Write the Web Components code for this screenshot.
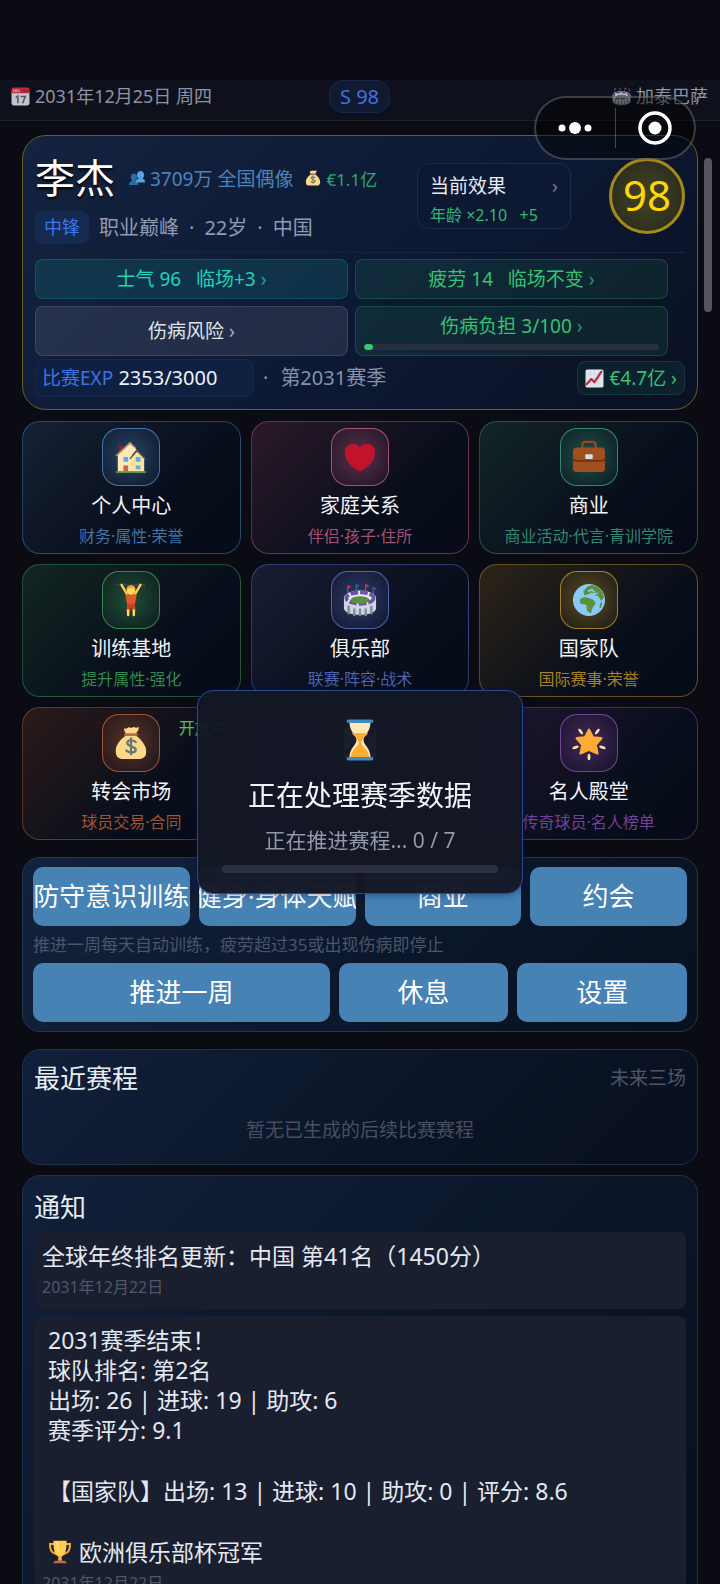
<!DOCTYPE html>
<html lang="zh-CN">
<head>
<meta charset="UTF-8">
<meta name="viewport" content="width=device-width, initial-scale=1">
<title>球员生涯</title>
<style>
    html, body {
        margin: 0;
        height: 100%;
    }
    body {
        background: #0b0b14;
        color: #eef1f8;
        font-family: "Noto Sans", "Noto Sans CJK SC", sans-serif;
        font-size: 19px;
        overflow: hidden;
    }
</style>
</head>
<body>
<career-app></career-app>

<script>
// 36x36 artwork, keyed by name
const ICONS = {
    calendar: `<path fill="#e1e5ea" d="M1 9h34v22a4 4 0 0 1-4 4H5a4 4 0 0 1-4-4z"/><path fill="#dd2e44" d="M5 1h26a4 4 0 0 1 4 4v7H1V5a4 4 0 0 1 4-4z"/><path d="M5 4v5H3M8 4v5h3V4M14 4v5h3" stroke="#f5dfe2" stroke-width="1.5" fill="none"/><circle cx="25" cy="7" r="1.5" fill="#7d1323"/><circle cx="31" cy="7" r="1.5" fill="#7d1323"/><path d="M9 20l4-3v14M18 18h9l-5 13" stroke="#5d6b78" stroke-width="3" fill="none"/>`,
    people: `<path fill="#2d6d9f" d="M0 34c0-7 3-9 8-10-3-2-4-5-4-8 0-5 3-8 7-8s7 3 7 8c0 3-1 6-4 8 5 1 7 3 7 10z"/><path fill="#55a3e0" d="M15 28c0-6 2-8 7-9-3-2-4-5-4-8 0-5 3-9 8-9s8 4 8 9c0 3-1 6-4 8 5 1 6 3 6 9z"/>`,
    money: `<path fill="#fdd888" d="M13 10C5 15 1 22 2 28c0 5 4 7 8 7h16c4 0 8-2 8-7 1-6-4-13-11-18z"/><path fill="#fdd888" d="M11 2c2 2 3 0 5-1 2 2 3 0 5 0 2 1 3 1 5 0 1 3-2 5-3 8H13c-1-3-3-4-2-7z"/><path d="M12 9h12" stroke="#bf6952" stroke-width="2.5" stroke-linecap="round"/><path d="M23 17c-2-2-9-3-9 1s9 3 9 7-7 4-10 1M18 13v17" stroke="#67757f" stroke-width="2.4" fill="none" stroke-linecap="round"/>`,
    chart: `<rect x="1" y="1" width="34" height="34" rx="3" fill="#e1e8ed"/><path d="M1 10h34M1 18h34M1 26h34M10 1v34M18 1v34M26 1v34" stroke="#c3ced6"/><path d="M3 29l9-10 6 6L31 5" stroke="#c91f42" stroke-width="4" fill="none" stroke-linejoin="round" stroke-linecap="round"/>`,
    house: `<path fill="#8e1d2c" d="M5 6h5v9H5z"/><path fill="#5c913b" d="M2 33h32v2H2z"/><path fill="#ffe8b6" d="M4 16L17 4l7 6-5 6v17H4z"/><path fill="#ffe3a0" d="M18 19l7-7 7 7v14H18z"/><path d="M2 17L17 3l6 6" stroke="#b89b6b" stroke-width="1.5" fill="none"/><path d="M17 20l7-9 9 9" stroke="#66594c" stroke-width="1.6" fill="none"/><path fill="#55acee" d="M10 18h5v5h-5zM23 18h5v5h-5zM23 27h5v4h-5z"/><path fill="#c1694f" d="M10 27h5v6h-5z"/>`,
    heart: `<path fill="#c1142c" d="M34 13c0-5-4-9-8-9-3 0-6 1-8 4-2-3-5-4-8-4-4 0-8 4-8 9 0 9 8 17 16 20 8-3 16-11 16-20z"/>`,
    briefcase: `<path d="M11 9V5a3 3 0 0 1 3-3h8a3 3 0 0 1 3 3v4" stroke="#8f4a1f" stroke-width="2.500" fill="none"/><rect x="1" y="8" width="34" height="26" rx="4" fill="#a0501e"/><path d="M1 19c0 3 2 3 4 3h26c2 0 4 0 4-3" stroke="#6f3210" stroke-width="1.800" fill="none"/><rect x="14" y="15" width="8" height="5" rx="1" fill="#d7dee3"/>`,
    lifter: `<path d="M1 2h34" stroke="#3b4b58" stroke-width="1.500"/><path d="M1 0v4M34 0v4" stroke="#202a33" stroke-width="2"/><path d="M8 2l7 12M28 2l-7 12" stroke="#ffcb4c" stroke-width="2.600" stroke-linecap="round"/><path fill="#e2572b" d="M12 12h12l-2 12h-8z"/><circle cx="18" cy="8" r="4.500" fill="#ffdc5d"/><path fill="#f3a52f" d="M13 7c0-6 10-6 10 0-3-2-7-2-10 0z"/><path fill="#c9432a" d="M14 22h8l1 8h-4l-1-5-1 5h-4z"/><path d="M15 29v5M21 29v5" stroke="#ffdc5d" stroke-width="2.600" stroke-linecap="round"/>`,
    stadium: `<path d="M5 12V3M14 9V1M24 9V1M32 12V4" stroke="#66757f" stroke-width="1"/><path fill="#dd2e44" d="M5 2l4 2-4 2zM24 1l4 2-4 2z"/><path fill="#226699" d="M14 1l4 2-4 2zM32 4l4 2-4 2z"/><path fill="#ccd6dd" d="M1 16v11c1 9 33 9 34 0V16z"/><ellipse cx="18" cy="16" rx="17" ry="8" fill="#e8edf1"/><ellipse cx="18" cy="16" rx="14.500" ry="6" fill="none" stroke="#7450a8" stroke-width="4" stroke-dasharray="8 2"/><ellipse cx="18" cy="18" rx="10" ry="4" fill="#5c913b"/><path d="M6 25v7M12 28v6M18 28v6M24 28v6M30 25v7" stroke="#7d8b96" stroke-width="2.500" stroke-linecap="round"/>`,
    globe: `<circle cx="18" cy="18" r="17" fill="#88c9f9"/><path fill="#5c913b" d="M8 18c3-4 7-3 10-2l5 2 2 4-3 4-2 6-4-2-1-7-6-1zM12 9l4-5 5-2c7 1 12 7 13 13l-3 4-3-5-4-1-3-3-4 2-4 1zM30 21l2-1-1 6-2 1z"/><path d="M17 9l4-2 3 3M22 12l5-1" stroke="#88c9f9" stroke-width="2" fill="none"/>`,
    star: `<path fill="#ffac33" stroke="#ffac33" stroke-width="2.500" stroke-linejoin="round" d="M18 4l4 8 9 1-6 7 2 9-9-4-9 4 2-9-6-7 9-1z"/><g fill="#ffe39a"><ellipse cx="18" cy="33" rx="1.500" ry="3.500"/><ellipse cx="18" cy="33" rx="1.500" ry="3.500" transform="rotate(72 18 18)"/><ellipse cx="18" cy="33" rx="1.500" ry="3.500" transform="rotate(144 18 18)"/><ellipse cx="18" cy="33" rx="1.500" ry="3.500" transform="rotate(216 18 18)"/><ellipse cx="18" cy="33" rx="1.500" ry="3.500" transform="rotate(288 18 18)"/></g>`,
    hourglass: `<path fill="#ffe8b6" d="M9 3h18c0 8-6 11-6 15s6 7 6 15H9c0-8 6-11 6-15S9 11 9 3z"/><path fill="#ffac33" d="M11 12h14c-2 3-5 4-6 8 0 4 6 5 7 13H10c1-8 7-9 7-13-1-4-4-5-6-8z"/><path d="M8 2h20M8 34h20" stroke="#4289c1" stroke-width="3" stroke-linecap="round"/>`,
    trophy: `<path d="M9 6H3c0 9 2 13 9 15M27 6h6c0 9-2 13-9 15" stroke="#ffac33" stroke-width="3" fill="none"/><path fill="#ffcc4d" d="M8 1h20c0 14-2 22-8 24v5h-4v-5C10 23 8 15 8 1z"/><path fill="#ffac33" d="M16 24h4l1 7h-6z"/><path fill="#c1694f" d="M10 31h16l2 4H8z"/><path fill="#ffdf83" d="M12 3h4c0 8 0 13 1 18-4-3-5-9-5-18z"/>`
};

const CARDS = [
    { icon: 'house', title: '个人中心', sub: '财务·属性·荣誉', rgb: '74, 136, 200' },
    { icon: 'heart', title: '家庭关系', sub: '伴侣·孩子·住所', rgb: '196, 92, 138' },
    { icon: 'briefcase', title: '商业', sub: '商业活动·代言·青训学院', rgb: '56, 160, 130' },
    { icon: 'lifter', title: '训练基地', sub: '提升属性·强化', rgb: '58, 160, 90' },
    { icon: 'stadium', title: '俱乐部', sub: '联赛·阵容·战术', rgb: '92, 116, 206' },
    { icon: 'globe', title: '国家队', sub: '国际赛事·荣誉', rgb: '196, 152, 40' },
    { icon: 'money', title: '转会市场', sub: '球员交易·合同', rgb: '190, 98, 56', badge: '开放中' },
    { icon: 'chart', title: '', sub: '', rgb: '70, 90, 120' },
    { icon: 'star', title: '名人殿堂', sub: '传奇球员·名人榜单', rgb: '138, 76, 176' }
];

class BaseElement extends HTMLElement {
    connectedCallback() {
        if (this.shadowRoot) return;
        this.attachShadow({ mode: 'open' });
        this.shadowRoot.innerHTML = this.render();
    }
}

class EmojiIcon extends BaseElement {
    render() {
        return `
            <style>
                :host {
                    display: inline-block;
                    flex: none;
                    width: var(--size, 19px);
                    height: var(--size, 19px);
                    white-space: normal;
                }
                svg {
                    display: block;
                    width: 100%;
                    height: 100%;
                }
            </style>
            <svg viewBox="0 0 36 36" aria-hidden="true">${ICONS[this.getAttribute('name')]}</svg>
        `;
    }
}

class TopBar extends BaseElement {
    render() {
        return `
            <style>
                :host {
                    display: grid;
                    grid-template-columns: 1fr auto 1fr;
                    padding: 0 12px 7px 11px;
                    background: #0e111b;
                    border-bottom: 1px solid #20232e;
                    color: #8f93a6;
                    font-size: 18px;
                    line-height: 33px;
                }
                span {
                    display: flex;
                    align-items: center;
                    gap: 5px;
                }
                .club {
                    justify-content: flex-end;
                }
                emoji-icon {
                    opacity: 0.85;
                }
                b {
                    font-size: 20px;
                    font-weight: normal;
                    box-sizing: border-box;
                    height: 33px;
                    line-height: 31px;
                    padding: 0 10px;
                    border: 1px solid #18284e;
                    border-radius: 14px;
                    background: #101a30;
                    color: #4272e0;
                }
            </style>
            <span><emoji-icon name="calendar"></emoji-icon>2031年12月25日 周四</span>
            <b>S 98</b>
            <span class="club"><emoji-icon name="stadium"></emoji-icon>加泰巴萨</span>
        `;
    }
}

class StatPill extends BaseElement {
    render() {
        const bar = this.getAttribute('value');
        return `
            <style>
                :host {
                    display: block;
                    --rgb: 52, 199, 110;
                    --fill: 0.1;
                    color: #35c271;
                }
                :host([tone="teal"]) {
                    --rgb: 20, 190, 180;
                    --fill: 0.14;
                    color: #20d3b8;
                }
                :host([tone="plain"]) {
                    --rgb: 160, 155, 170;
                    --fill: 0.15;
                    color: #dfe3ee;
                }
                button {
                    display: flex;
                    flex-direction: column;
                    align-items: center;
                    justify-content: center;
                    gap: 5px;
                    width: 100%;
                    height: 100%;
                    padding: 0 8px;
                    border: 1px solid rgba(var(--rgb), 0.22);
                    border-radius: 8px;
                    background: rgba(var(--rgb), var(--fill));
                    color: inherit;
                    font: inherit;
                    line-height: 26px;
                    white-space: pre;
                }
                i {
                    font-style: normal;
                    opacity: 0.7;
                }
                .bar {
                    width: 100%;
                    height: 6px;
                    border-radius: 3px;
                    background: #2a2f40;
                    overflow: hidden;
                }
                .bar div {
                    height: 100%;
                    width: ${bar}%;
                    border-radius: 3px;
                    background: #35c96f;
                }
            </style>
            <button type="button">
                <span><slot></slot><i> ›</i></span>
                ${bar ? `<div class="bar" role="progressbar" aria-valuenow="${bar}"><div></div></div>` : ''}
            </button>
        `.replace(/>\s+</g, '><');
    }
}

class PlayerCard extends BaseElement {
    render() {
        return `
            <style>
                :host {
                    display: block;
                    padding: 22px 12px 12px;
                    border: 1px solid #675f25;
                    border-radius: 24px;
                    background: linear-gradient(135deg, #14233f, #0d1a36 50%, #0a1022);
                }
                button {
                    font: inherit;
                    color: inherit;
                    text-align: left;
                }
                .head {
                    display: flex;
                    align-items: flex-start;
                    padding-bottom: 8px;
                    border-bottom: 1px solid #18233c;
                }
                .info {
                    flex: 1;
                    min-width: 0;
                    white-space: nowrap;
                }
                .line {
                    display: flex;
                    align-items: center;
                }
                h1 {
                    margin: 0 14px 0 0;
                    font-size: 40px;
                    font-weight: normal;
                    line-height: 40px;
                    color: #fff;
                    text-shadow: 0 2px 3px #000;
                }
                .fans, .cash {
                    display: flex;
                    align-items: center;
                    gap: 5px;
                    color: #4c83bb;
                    margin-right: 12px;
                }
                .cash {
                    color: #31a968;
                    font-size: 17px;
                }
                .fans emoji-icon, .cash emoji-icon {
                    --size: 16px;
                }
                .role {
                    margin-top: 13px;
                    gap: 10px;
                    font-size: 20px;
                    line-height: 33px;
                    color: #8f9ab3;
                }
                .tag {
                    padding: 0 9px;
                    border-radius: 8px;
                    background: #152a50;
                    color: #3c78ea;
                    font-size: 18px;
                }
                .effects {
                    display: grid;
                    grid-template-columns: 1fr auto;
                    box-sizing: border-box;
                    width: 154px;
                    height: 66px;
                    margin: 5px 38px 0 0;
                    padding: 8px 12px 0;
                    border: 1px solid #182c52;
                    border-radius: 12px;
                    background: #0d1933;
                    color: #e6eaf4;
                    line-height: 28px;
                }
                .effects small {
                    grid-column: 1 / -1;
                    color: #33b873;
                    font-size: 16px;
                    line-height: 30px;
                    white-space: pre;
                }
                .effects i {
                    font-style: normal;
                    color: #75809a;
                }
                .rating {
                    box-sizing: border-box;
                    width: 76px;
                    height: 76px;
                    border: 3px solid #a58a18;
                    border-radius: 50%;
                    background: radial-gradient(#44431f, #2e301f 70%);
                    color: #ffd60a;
                    font-size: 42px;
                    line-height: 68px;
                    text-align: center;
                }
                .stats {
                    display: grid;
                    grid-template-columns: 1fr 1fr;
                    grid-template-rows: 40px 50px;
                    gap: 7px;
                    padding: 6px 17px 3px 0;
                }
                .foot {
                    display: flex;
                    align-items: center;
                    font-size: 20px;
                    line-height: 36px;
                    color: #8590aa;
                    white-space: nowrap;
                }
                .exp {
                    box-sizing: border-box;
                    width: 219px;
                    padding: 0 6px;
                    border: 1px solid #17294a;
                    border-radius: 8px;
                    background: #0f2041;
                    color: #eef2fa;
                }
                .exp span {
                    color: #3c74e4;
                    font-size: 19px;
                }
                .season {
                    display: flex;
                    flex: 1;
                    gap: 12px;
                    padding-left: 9px;
                }
                .value {
                    display: flex;
                    align-items: center;
                    padding: 0 7px;
                    border: 1px solid #173838;
                    border-radius: 8px;
                    background: #0c212d;
                    color: #35c271;
                    font-size: 19px;
                    line-height: 32px;
                    gap: 5px;
                }
            </style>
            <div class="head">
                <div class="info">
                    <div class="line">
                        <h1>李杰</h1>
                        <span class="fans"><emoji-icon name="people"></emoji-icon>3709万 全国偶像</span>
                        <span class="cash"><emoji-icon name="money"></emoji-icon>€1.1亿</span>
                    </div>
                    <div class="line role">
                        <span class="tag">中锋</span>
                        <span>职业巅峰</span><span>·</span><span>22岁</span><span>·</span><span>中国</span>
                    </div>
                </div>
                <button class="effects" type="button"><span>当前效果</span><i>›</i><small>年龄 ×2.10   +5</small></button>
                <div class="rating">98</div>
            </div>
            <div class="stats">
                <stat-pill tone="teal">士气 96   临场+3</stat-pill>
                <stat-pill>疲劳 14   临场不变</stat-pill>
                <stat-pill tone="plain">伤病风险</stat-pill>
                <stat-pill value="3">伤病负担 3/100</stat-pill>
            </div>
            <div class="foot">
                <div class="exp"><span>比赛EXP</span> 2353/3000</div>
                <div class="season"><span>·</span><span>第2031赛季</span></div>
                <button class="value" type="button"><emoji-icon name="chart"></emoji-icon>€4.7亿 ›</button>
            </div>
        `;
    }
}

class MenuCard extends BaseElement {
    render() {
        const badge = this.getAttribute('badge');
        return `
            <style>
                :host {
                    display: block;
                    position: relative;
                }
                a {
                    display: flex;
                    flex-direction: column;
                    align-items: center;
                    box-sizing: border-box;
                    height: 100%;
                    padding: 6px 0;
                    border: 1px solid rgba(var(--rgb), 0.45);
                    border-radius: 18px;
                    background: linear-gradient(135deg, rgba(var(--rgb), 0.18), rgba(6, 16, 32, 0.6) 65%, rgba(4, 12, 24, 0.7));
                    color: #f2f4fa;
                    text-decoration: none;
                    white-space: nowrap;
                }
                .tile {
                    display: grid;
                    place-items: center;
                    box-sizing: border-box;
                    width: 58px;
                    height: 58px;
                    border: 1px solid rgba(var(--rgb), 0.8);
                    border-radius: 17px;
                    background: radial-gradient(rgba(var(--rgb), 0.42), rgba(var(--rgb), 0.14) 75%);
                    --size: 34px;
                }
                .title {
                    margin-top: 6px;
                    font-size: 20px;
                    line-height: 28px;
                }
                .sub {
                    margin-top: 5px;
                    font-size: 16px;
                    line-height: 22px;
                    color: rgba(var(--rgb), 0.85);
                }
                .badge {
                    position: absolute;
                    top: 10px;
                    right: 14px;
                    font-size: 16px;
                    line-height: 22px;
                    color: #4cc566;
                }
            </style>
            <a href="#${this.getAttribute('icon')}">
                <span class="tile"><emoji-icon name="${this.getAttribute('icon')}"></emoji-icon></span>
                <span class="title"><slot></slot></span>
                <span class="sub"><slot name="sub"></slot></span>
            </a>
            ${badge ? `<span class="badge">${badge}</span>` : ''}
        `;
    }
}

class QuickActions extends BaseElement {
    render() {
        return `
            <style>
                :host {
                    display: block;
                    padding: 9px 10px;
                    border: 1px solid #223850;
                    border-radius: 18px;
                    background: linear-gradient(135deg, #13223d, #0b172b 55%, #07101f);
                }
                .row {
                    display: grid;
                    grid-template-columns: repeat(4, 1fr);
                    gap: 9px;
                }
                .row.wide {
                    grid-template-columns: 7fr 4fr 4fr;
                }
                button {
                    display: flex;
                    align-items: center;
                    justify-content: center;
                    min-width: 0;
                    height: 59px;
                    padding: 0 0 3px;
                    border: 0;
                    border-radius: 10px;
                    background: #4682b4;
                    color: #fff;
                    font: inherit;
                    font-size: 26px;
                    white-space: nowrap;
                    overflow: hidden;
                }
                p {
                    margin: 7px 0 6px;
                    font-size: 17px;
                    line-height: 24px;
                    color: #4b5468;
                }
            </style>
            <div class="row">
                <button type="button">防守意识训练</button>
                <button type="button">健身·身体天赋</button>
                <button type="button">商业</button>
                <button type="button">约会</button>
            </div>
            <p>推进一周每天自动训练，疲劳超过35或出现伤病即停止</p>
            <div class="row wide">
                <button type="button">推进一周</button>
                <button type="button">休息</button>
                <button type="button">设置</button>
            </div>
        `;
    }
}

class SectionPanel extends BaseElement {
    render() {
        return `
            <style>
                :host {
                    display: block;
                    padding: 10px 11px 17px;
                    border: 1px solid #1e324a;
                    border-radius: 18px;
                    background: linear-gradient(135deg, #11203a, #0b1629 50%, #080f1e);
                }
                header {
                    display: flex;
                    align-items: center;
                    justify-content: space-between;
                    line-height: 36px;
                    color: #4d5568;
                }
                h2 {
                    margin: 0;
                    font-size: 26px;
                    font-weight: normal;
                    color: #e8ecf5;
                }
            </style>
            <header><h2>${this.getAttribute('heading')}</h2><slot name="extra"></slot></header>
            <slot></slot>
        `;
    }
}

class NoticeItem extends BaseElement {
    render() {
        return `
            <style>
                :host {
                    display: block;
                    margin-top: 7px;
                    padding: 9px 8px 10px;
                    border-radius: 8px;
                    background: #1a1f30;
                    font-size: 23px;
                    line-height: 30px;
                    color: #e4e8f2;
                }
                time {
                    display: block;
                    margin-top: 4px;
                    font-size: 16px;
                    line-height: 24px;
                    color: #50566a;
                }
            </style>
            <slot></slot>
            <time>${this.getAttribute('date')}</time>
        `;
    }
}

class LoadingDialog extends BaseElement {
    render() {
        return `
            <style>
                :host {
                    position: fixed;
                    inset: 0;
                    display: grid;
                    place-items: center;
                }
                .box {
                    box-sizing: border-box;
                    width: 326px;
                    padding: 28px 24px 20px;
                    border: 1px solid #264a8c;
                    border-radius: 16px;
                    background: rgba(20, 24, 37, 0.97);
                    box-shadow: 0 0 8px rgba(0, 20, 80, 0.5);
                    display: flex;
                    flex-direction: column;
                    align-items: center;
                    --size: 42px;
                }
                h2 {
                    margin: 14px 0 0;
                    font-size: 28px;
                    font-weight: normal;
                    line-height: 40px;
                    color: #f2f4fa;
                }
                p {
                    margin: 10px 0;
                    font-size: 21px;
                    line-height: 30px;
                    color: #9297aa;
                }
                .bar {
                    width: 100%;
                    height: 8px;
                    border-radius: 4px;
                    background: #2b2f3e;
                }
            </style>
            <div class="box" role="dialog" aria-labelledby="t">
                <emoji-icon name="hourglass"></emoji-icon>
                <h2 id="t">正在处理赛季数据</h2>
                <p>正在推进赛程... 0 / 7</p>
                <div class="bar" role="progressbar" aria-valuenow="0" aria-valuemax="7"></div>
            </div>
        `;
    }
}

class MiniCapsule extends BaseElement {
    render() {
        return `
            <style>
                :host {
                    position: fixed;
                    top: 96px;
                    right: 24px;
                    display: flex;
                    align-items: center;
                    box-sizing: border-box;
                    width: 162px;
                    height: 64px;
                    border: 2px solid rgba(255, 255, 255, 0.22);
                    border-radius: 32px;
                    background: rgba(0, 0, 0, 0.45);
                }
                button {
                    flex: 1;
                    display: grid;
                    place-items: center;
                    padding: 0;
                    border: 0;
                    background: none;
                }
                hr {
                    width: 1px;
                    height: 40px;
                    margin: 0;
                    border: 0;
                    background: rgba(255, 255, 255, 0.25);
                }
            </style>
            <button type="button" aria-label="更多"><svg width="36" height="36" fill="#fff"><circle cx="5" cy="18" r="3.500"/><circle cx="18" cy="18" r="6"/><circle cx="31" cy="18" r="3.500"/></svg></button>
            <hr>
            <button type="button" aria-label="关闭"><svg width="36" height="36" fill="#fff"><circle cx="18" cy="18" r="15" fill="none" stroke="#fff" stroke-width="3.500"/><circle cx="18" cy="18" r="6.500"/></svg></button>
        `;
    }
}

class CareerApp extends BaseElement {
    render() {
        return `
            <style>
                :host {
                    display: block;
                    height: 100vh;
                    box-sizing: border-box;
                    padding-top: 80px;
                    overflow: hidden;
                }
                main {
                    padding: 14px 22px;
                }
                nav {
                    display: grid;
                    grid-template-columns: repeat(3, 1fr);
                    gap: 10px;
                    margin: 11px 0 17px;
                }
                section-panel {
                    margin-top: 17px;
                }
                section-panel + section-panel {
                    margin-top: 10px;
                    padding-top: 13px;
                }
                .empty {
                    margin: 24px 0 7px;
                    line-height: 20px;
                    text-align: center;
                    color: #474f62;
                }
                .report {
                    margin: 0 6px;
                }
                .report p {
                    margin: 0 0 31px;
                }
                .report p:last-child {
                    display: flex;
                    align-items: center;
                    gap: 7px;
                    margin: 0;
                    --size: 24px;
                }
                /* scroll position thumb */
                .thumb {
                    position: fixed;
                    top: 158px;
                    right: 8px;
                    width: 8px;
                    height: 154px;
                    border-radius: 4px;
                    background: #55555b;
                }
            </style>
            <top-bar></top-bar>
            <main>
                <player-card></player-card>
                <nav>
                    ${CARDS.map(c => `
                        <menu-card icon="${c.icon}" style="--rgb: ${c.rgb}" ${c.badge ? `badge="${c.badge}"` : ''}>${c.title}<span slot="sub">${c.sub}</span></menu-card>
                    `).join('')}
                </nav>
                <quick-actions></quick-actions>
                <section-panel heading="最近赛程">
                    <span slot="extra">未来三场</span>
                    <p class="empty">暂无已生成的后续比赛赛程</p>
                </section-panel>
                <section-panel heading="通知">
                    <notice-item date="2031年12月22日">全球年终排名更新：中国 第41名（1450分）</notice-item>
                    <notice-item date="2031年12月22日">
                        <div class="report">
                            <p>2031赛季结束！<br>球队排名: 第2名<br>出场: 26 | 进球: 19 | 助攻: 6<br>赛季评分: 9.1</p>
                            <p>【国家队】出场: 13 | 进球: 10 | 助攻: 0 | 评分: 8.6</p>
                            <p><emoji-icon name="trophy"></emoji-icon>欧洲俱乐部杯冠军</p>
                        </div>
                    </notice-item>
                </section-panel>
            </main>
            <div class="thumb"></div>
            <loading-dialog></loading-dialog>
            <mini-capsule></mini-capsule>
        `;
    }
}

customElements.define('emoji-icon', EmojiIcon);
customElements.define('top-bar', TopBar);
customElements.define('stat-pill', StatPill);
customElements.define('player-card', PlayerCard);
customElements.define('menu-card', MenuCard);
customElements.define('quick-actions', QuickActions);
customElements.define('section-panel', SectionPanel);
customElements.define('notice-item', NoticeItem);
customElements.define('loading-dialog', LoadingDialog);
customElements.define('mini-capsule', MiniCapsule);
customElements.define('career-app', CareerApp);
</script>
</body>
</html>
